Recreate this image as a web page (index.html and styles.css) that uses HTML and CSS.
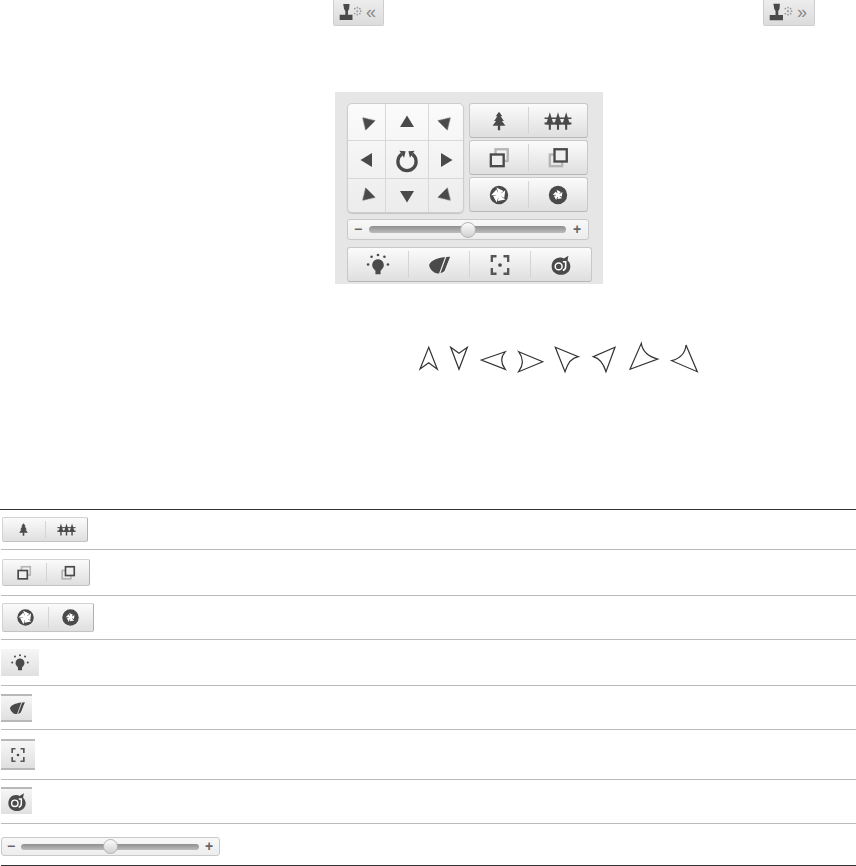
FILE: index.html
```html
<!DOCTYPE html>
<html lang="en">
<head>
<meta charset="UTF-8" />
<title>PTZ control panel</title>
<link rel="stylesheet" href="styles.css">
</head>
<body>
<svg class="sprites" width="0" height="0">
  <defs>
    <symbol id="i-tri" viewBox="0 0 24 24"><polygon points="12,5.500 19,17 5,17" /></symbol>
    <symbol id="i-stamp" viewBox="0 0 32 24">
      <path d="M5 3h7.500l-.5 6-1.400 2.500V16h5.400v6H.8v-6h6.700v-4.500L6 9z" />
      <g fill="#9a9a9a"><circle cx="21.700" cy="7.500" r="1" /><circle cx="24.700" cy="8.700" r="1" /><circle cx="25.800" cy="11.600" r="1" /><circle cx="24.700" cy="14.500" r="1" /><circle cx="21.700" cy="15.700" r="1" /><circle cx="18.700" cy="14.500" r="1" /><circle cx="18.700" cy="8.700" r="1" /><circle cx="21.700" cy="11.600" r="1.200" /></g>
    </symbol>
    <symbol id="i-back" viewBox="0 0 24 24">
      <rect x="9" y="4.500" width="10.500" height="10" fill="none" stroke="#b5b5b5" stroke-width="2" />
      <rect x="5" y="9" width="11" height="10" fill="#efefef" stroke="#4a4a4a" stroke-width="2" />
    </symbol>
    <symbol id="i-front" viewBox="0 0 24 24">
      <rect x="5" y="9" width="10.500" height="10" fill="none" stroke="#b5b5b5" stroke-width="2" />
      <rect x="9" y="4.500" width="10.500" height="10.500" fill="#efefef" stroke="#4a4a4a" stroke-width="2" />
    </symbol>
    <symbol id="i-tree" viewBox="0 0 24 24">
      <path d="M12 4l2.800 4h-1.400l2.800 4h-1.700l3 4H13v4h-2v-4H6.500l3-4H7.800l2.800-4H9.200z" />
    </symbol>
    <symbol id="i-forest" viewBox="0 0 24 24">
      <path d="M5 4.500L8.200 15H5.900v4.500H4.100V15H1.800z" />
      <path d="M12 4.500L15.200 15h-2.300v4.500h-1.800V15H8.800z" />
      <path d="M19 4.500L22.200 15h-2.300v4.500h-1.800V15h-2.300z" />
      <rect x="0.500" y="9" width="23" height="1.300" />
      <rect x="0.500" y="13.200" width="23" height="1.800" />
    </symbol>
    <symbol id="i-iris-open" viewBox="0 0 24 24">
      <circle cx="12" cy="12" r="7.900" />
      <g fill="#fff">
        <circle cx="12" cy="12" r="2.400" />
        <path d="M12 12L9.800 5.600 15.800 8.500z" />
        <path d="M12 12L9.800 5.600 15.800 8.500z" transform="rotate(72 12 12)" />
        <path d="M12 12L9.800 5.600 15.800 8.500z" transform="rotate(144 12 12)" />
        <path d="M12 12L9.800 5.600 15.800 8.500z" transform="rotate(216 12 12)" />
        <path d="M12 12L9.800 5.600 15.800 8.500z" transform="rotate(288 12 12)" />
      </g>
    </symbol>
    <symbol id="i-iris-close" viewBox="0 0 24 24">
      <circle cx="12" cy="12" r="7.900" />
      <g fill="#fff">
        <circle cx="12" cy="12" r="1.800" />
        <path d="M12 12L10.800 7.600 14.400 9.400z" />
        <path d="M12 12L10.800 7.600 14.400 9.400z" transform="rotate(72 12 12)" />
        <path d="M12 12L10.800 7.600 14.400 9.400z" transform="rotate(144 12 12)" />
        <path d="M12 12L10.800 7.600 14.400 9.400z" transform="rotate(216 12 12)" />
        <path d="M12 12L10.800 7.600 14.400 9.400z" transform="rotate(288 12 12)" />
      </g>
    </symbol>
    <symbol id="i-reset" viewBox="0 0 24 24">
      <path d="M7.500 7a7.800 7.800 0 1 0 9 0" fill="none" stroke="#4a4a4a" stroke-width="2.800" />
      <polygon points="5.500,4 10.800,4.500 9.500,10" />
      <polygon points="18.500,4 13.200,4.500 14.500,10" />
    </symbol>
    <symbol id="i-bulb" viewBox="0 0 24 24">
      <path d="M12 7a5 5 0 0 1 3.400 8.600L14.200 17v3H9.800v-3l-1.200-1.400A5 5 0 0 1 12 7z" />
      <circle cx="12" cy="3.500" r="1.100" /><circle cx="6.500" cy="5" r="1.100" /><circle cx="17.500" cy="5" r="1.100" /><circle cx="3.500" cy="11.500" r="1.100" /><circle cx="20.500" cy="11.500" r="1.100" />
    </symbol>
    <symbol id="i-wiper" viewBox="0 0 24 24">
      <path d="M3.500 12C5 8 11 5.500 21.500 5L17 17c-3 2.500-6 3-9 1.500C5.500 17 4 14.500 3.500 12z" />
      <path d="M18 4.500L12.500 19.500M21.500 7L16.500 19.500" fill="none" stroke="#efefef" stroke-width="1" />
    </symbol>
    <symbol id="i-focus" viewBox="0 0 24 24">
      <path d="M9 4.500H5v5M15 4.500h4v5M9 19.500H5v-5M15 19.500h4v-5" fill="none" stroke="#555" stroke-width="2" />
      <circle cx="12" cy="12" r="1.600" />
    </symbol>
    <symbol id="i-touch" viewBox="0 0 24 24">
      <g transform="translate(2.400 2.400) scale(.8)">
        <path d="M2 13.500C2 8 6 4 11 4c1.500 0 3 .4 4 1l5-3-1 5c2 2 3 4 3 6.500C22 19 17.500 22.500 12 22.500S2 19 2 13.500z" />
        <circle cx="9.500" cy="13.500" r="3.700" fill="none" stroke="#fff" stroke-width="1.600" />
        <path d="M14 8.500h3V14c0 2.500-1.500 3.500-3 4" fill="none" stroke="#fff" stroke-width="1.700" />
      </g>
    </symbol>
  </defs>
</svg>

<div class="top-bar">
  <button class="stamp-btn"><svg class="ico-stamp"><use href="#i-stamp" /></svg><span class="chev">«</span></button>
  <button class="stamp-btn stamp-wide"><svg class="ico-stamp"><use href="#i-stamp" /></svg><span class="chev">»</span></button>
</div>

<div class="panel">
  <div class="panel-top">
    <div class="dpad">
      <div class="dcell"><svg class="ico-tri r-315"><use href="#i-tri" /></svg></div>
      <div class="dcell"><svg class="ico-tri"><use href="#i-tri" /></svg></div>
      <div class="dcell"><svg class="ico-tri r-45"><use href="#i-tri" /></svg></div>
      <div class="dcell"><svg class="ico-tri r-270"><use href="#i-tri" /></svg></div>
      <div class="dcell"><svg class="ico-reset"><use href="#i-reset" /></svg></div>
      <div class="dcell"><svg class="ico-tri r-90"><use href="#i-tri" /></svg></div>
      <div class="dcell"><svg class="ico-tri r-225"><use href="#i-tri" /></svg></div>
      <div class="dcell"><svg class="ico-tri r-180"><use href="#i-tri" /></svg></div>
      <div class="dcell"><svg class="ico-tri r-135"><use href="#i-tri" /></svg></div>
    </div>
    <div class="pairs">
      <div class="btn-bar"><span class="seg"><svg class="ico"><use href="#i-tree" /></svg></span><span class="seg"><svg class="ico"><use href="#i-forest" /></svg></span></div>
      <div class="btn-bar"><span class="seg"><svg class="ico"><use href="#i-back" /></svg></span><span class="seg"><svg class="ico"><use href="#i-front" /></svg></span></div>
      <div class="btn-bar"><span class="seg"><svg class="ico"><use href="#i-iris-open" /></svg></span><span class="seg"><svg class="ico"><use href="#i-iris-close" /></svg></span></div>
    </div>
  </div>
  <div class="slider slider-panel">
    <span class="sign">−</span>
    <div class="track"><span class="knob"></span></div>
    <span class="sign">+</span>
  </div>
  <div class="btn-bar bar-four">
    <span class="seg"><svg class="ico"><use href="#i-bulb" /></svg></span>
    <span class="seg"><svg class="ico"><use href="#i-wiper" /></svg></span>
    <span class="seg"><svg class="ico"><use href="#i-focus" /></svg></span>
    <span class="seg"><svg class="ico"><use href="#i-touch" /></svg></span>
  </div>
</div>

<svg class="pointers" viewBox="0 0 300 40">
  <polygon points="18.700,7.300 27.300,29.300 18.700,22.700 10,29" />
  <polygon points="40.700,7.300 49,13.300 57.300,7.300 49,29.300" />
  <path d="M71.300 20L95.300 11.700Q88 20 95.300 29.300Z" />
  <path d="M108.700 11.700L132.700 21.700L108.700 31.700Q116 21.700 108.700 11.700Z" />
  <path d="M145.300 7.300L168.300 16.700Q159.300 18 155 31.700Z" />
  <path d="M205 7.300L183.300 16.700Q192 19 196 31.700Z" />
  <path d="M231.300 3.300Q233 15 247.700 19L220 29.300Z" />
  <path d="M276 5Q275 17 261.700 20.700L287.300 31.700Z" />
</svg>

<div class="legend">
  <div class="row row-a">
    <div class="btn-bar thumb t-1"><span class="seg"><svg class="ico"><use href="#i-tree" /></svg></span><span class="seg"><svg class="ico"><use href="#i-forest" /></svg></span></div>
  </div>
  <div class="row row-b">
    <div class="btn-bar thumb t-2"><span class="seg"><svg class="ico"><use href="#i-back" /></svg></span><span class="seg"><svg class="ico"><use href="#i-front" /></svg></span></div>
  </div>
  <div class="row row-c">
    <div class="btn-bar thumb t-3"><span class="seg"><svg class="ico"><use href="#i-iris-open" /></svg></span><span class="seg"><svg class="ico"><use href="#i-iris-close" /></svg></span></div>
  </div>
  <div class="row row-d">
    <div class="tile t-bulb"><svg class="ico"><use href="#i-bulb" /></svg></div>
  </div>
  <div class="row row-c">
    <div class="tile tile-lined t-wiper"><svg class="ico"><use href="#i-wiper" /></svg></div>
  </div>
  <div class="row row-e">
    <div class="tile tile-lined t-focus"><svg class="ico"><use href="#i-focus" /></svg></div>
  </div>
  <div class="row row-c">
    <div class="tile tile-top t-touch"><svg class="ico"><use href="#i-touch" /></svg></div>
  </div>
  <div class="row row-f">
    <div class="slider slider-thumb">
      <span class="sign">−</span>
      <div class="track"><span class="knob"></span></div>
      <span class="sign">+</span>
    </div>
  </div>
</div>
</body>
</html>
```

FILE: styles.css
```css
html, body {
  margin: 0;
  background: #fff;
  font-family: 'Liberation Sans', Arial, sans-serif;
}
svg {
  fill: #4a4a4a;
}
.sprites {
  position: absolute;
}
/* Top stamp buttons */
.top-bar {
  display: flex;
  gap: 379px;
  padding-left: 333px;
  height: 26px;
}
.stamp-btn {
  display: flex;
  align-items: center;
  justify-content: space-between;
  box-sizing: border-box;
  width: 51px;
  height: 26px;
  padding: 0 5px 2px 5px;
  background: linear-gradient(#ededed, #dcdcdc);
  border: 1px solid #cfcfcf;
  border-top: none;
  border-radius: 0 0 2px 2px;
}
.stamp-wide {
  width: 52px;
}
.ico-stamp {
  width: 28px;
  height: 21px;
  filter: blur(0.3px);
}
.chev {
  font-size: 18px;
  line-height: 18px;
  color: #8a8a8a;
  padding-right: 2px;
}
/* Control panel */
.panel {
  box-sizing: border-box;
  width: 268px;
  height: 192px;
  margin: 66px 0 0 335px;
  padding: 11px 12px;
  background: #e6e6e6;
}
.panel-top {
  display: flex;
  gap: 5px;
}
.dpad {
  display: grid;
  grid-template-columns: 38px 43px 1fr;
  grid-template-rows: 37px 38px 1fr;
  box-sizing: border-box;
  width: 117px;
  height: 110px;
  background: linear-gradient(#fbfbfb, #ececec);
  border: 1px solid #cdcdcd;
  border-radius: 5px;
  box-shadow: 0 1px 1px #c4c4c4;
}
.dcell {
  display: flex;
  align-items: center;
  justify-content: center;
  border-right: 1px solid #d8d8d8;
  border-bottom: 1px solid #d8d8d8;
}
.dcell:nth-child(3n) {
  border-right: none;
}
.dcell:nth-child(n+7) {
  border-bottom: none;
}
.ico-tri {
  width: 24px;
  height: 24px;
  filter: blur(0.3px);
}
.r-45 { transform: rotate(45deg); }
.r-90 { transform: rotate(90deg); }
.r-135 { transform: rotate(135deg); }
.r-180 { transform: rotate(180deg); }
.r-225 { transform: rotate(225deg); }
.r-270 { transform: rotate(270deg); }
.r-315 { transform: rotate(315deg); }
.ico-reset {
  width: 28px;
  height: 28px;
  filter: blur(0.3px);
}
.pairs {
  display: flex;
  flex-direction: column;
  gap: 2px;
  width: 119px;
}
.btn-bar {
  display: flex;
  box-sizing: border-box;
  height: 35px;
  background: linear-gradient(#fbfbfb, #dfdfdf);
  border: 1px solid #c8c8c8;
  border-bottom-color: #b8b8b8;
  border-radius: 3px;
}
.seg {
  flex: 1;
  display: flex;
  align-items: center;
  justify-content: center;
  margin: 3px 0;
  border-right: 1px solid #d4d4d4;
}
.seg:last-child {
  border-right: none;
}
.ico {
  width: 28px;
  height: 28px;
  filter: blur(0.3px);
}
.bar-four {
  width: 245px;
  margin-top: 7px;
}
/* Sliders */
.slider {
  display: flex;
  align-items: center;
  box-sizing: border-box;
  background: linear-gradient(#f8f8f8, #ededed);
  border: 1px solid #c9c9c9;
  border-radius: 3px;
}
.slider-panel {
  width: 242px;
  height: 21px;
  margin-top: 6px;
  padding: 0 6px 0 5px;
  gap: 6px;
}
.sign {
  width: 10px;
  font-size: 14px;
  font-weight: bold;
  line-height: 13px;
  text-align: center;
  color: #666;
}
.track {
  flex: 1;
  position: relative;
  height: 7px;
  background: linear-gradient(#8f8f8f, #bdbdbd);
  border-radius: 4px;
}
.knob {
  position: absolute;
  top: 50%;
  left: 50%;
  box-sizing: border-box;
  width: 16px;
  height: 16px;
  margin: -8px 0 0 -8px;
  background: linear-gradient(#fbfbfb, #d2d2d2);
  border: 1px solid #b5b5b5;
  border-radius: 50%;
}
.slider-thumb {
  width: 219px;
  height: 19px;
  margin: 4px 0 0 0;
  padding: 0 5px 0 4px;
  gap: 5px;
}
.slider-thumb .track {
  height: 6px;
}
.slider-thumb .knob {
  width: 15px;
  height: 15px;
  margin: -7.5px 0 0 -7.5px;
}
/* Pointer outlines */
.pointers {
  display: block;
  width: 300px;
  height: 40px;
  margin: 56px 0 0 410px;
  fill: #fff;
}
.pointers polygon, .pointers path {
  stroke: #333;
  stroke-width: 1.2;
}
/* Legend table */
.legend {
  margin-top: 129px;
  padding-left: 1px;
  border-top: 1px solid #333;
}
.row {
  display: flex;
  align-items: center;
  box-sizing: border-box;
  border-bottom: 1px solid #bbb;
  height: 46px;
}
.row-a { height: 40px; }
.row-b { height: 46px; }
.row-c { height: 44px; }
.row-d { height: 46px; }
.row-e { height: 50px; }
.row-f {
  height: 42px;
  border-bottom: 1px solid #333;
}
.row:nth-child(7) { padding-bottom: 2px; }
.thumb {
  margin-left: 1px;
  border-radius: 2px;
  border-color: #d2d2d2 #b0b0b0 #c4c4c4 #d2d2d2;
}
.t-1 { width: 86px; height: 25px; }
.t-2 { width: 88px; height: 27px; }
.t-3 { width: 92px; height: 29px; }
.t-1 .ico { width: 19px; height: 19px; }
.t-2 .ico { width: 20px; height: 20px; }
.t-3 .ico { width: 25px; height: 25px; }
.tile {
  display: flex;
  align-items: center;
  justify-content: center;
  box-sizing: border-box;
  background: linear-gradient(#f6f6f6, #e0e0e0);
}
.tile-lined {
  border-top: 2px solid #b8b8b8;
  border-bottom: 2px solid #b8b8b8;
}
.tile-top {
  border-top: 2px solid #b8b8b8;
}
.t-bulb { width: 38px; height: 27px; }
.t-wiper { width: 31px; height: 28px; }
.t-focus { width: 34px; height: 31px; }
.t-touch { width: 31px; height: 27px; }
.t-bulb .ico { width: 22px; height: 22px; }
.t-wiper .ico { width: 20px; height: 20px; }
.t-focus .ico { width: 20px; height: 20px; }
.t-touch .ico { width: 26px; height: 26px; }
```
